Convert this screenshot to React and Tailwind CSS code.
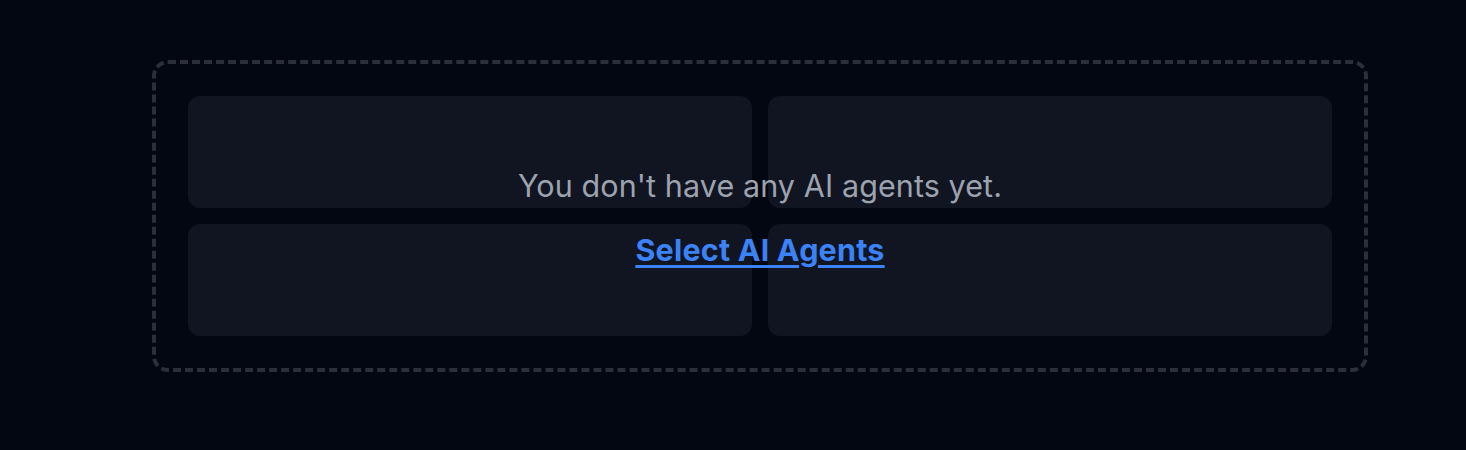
export default function App() {
  return (
    <div className="min-h-[450px] w-full bg-[#030712] pt-[60px] pl-[152px] font-['Inter',sans-serif]">
      <div className="relative w-[1216px] rounded-2xl border-4 border-dashed border-[#2a303b] p-8">
        {/* placeholder cards */}
        <div className="grid grid-cols-2 gap-4">
          <div className="h-[112px] rounded-xl bg-[#111521]" />
          <div className="h-[112px] rounded-xl bg-[#111521]" />
          <div className="h-[112px] rounded-xl bg-[#111521]" />
          <div className="h-[112px] rounded-xl bg-[#111521]" />
        </div>
        {/* empty state message */}
        <div className="absolute inset-0 flex flex-col items-center justify-center gap-[28px] pt-1">
          <p className="text-[30.5px] leading-[36px] tracking-[0.1px] text-[#9ca3af]">You don't have any AI agents yet.</p>
          <a href="#" className="text-[30.5px] leading-[36px] font-bold tracking-[0.2px] text-[#3b82f6] underline underline-offset-[4px] decoration-[3px]">
            Select AI Agents
          </a>
        </div>
      </div>
    </div>
  );
}
